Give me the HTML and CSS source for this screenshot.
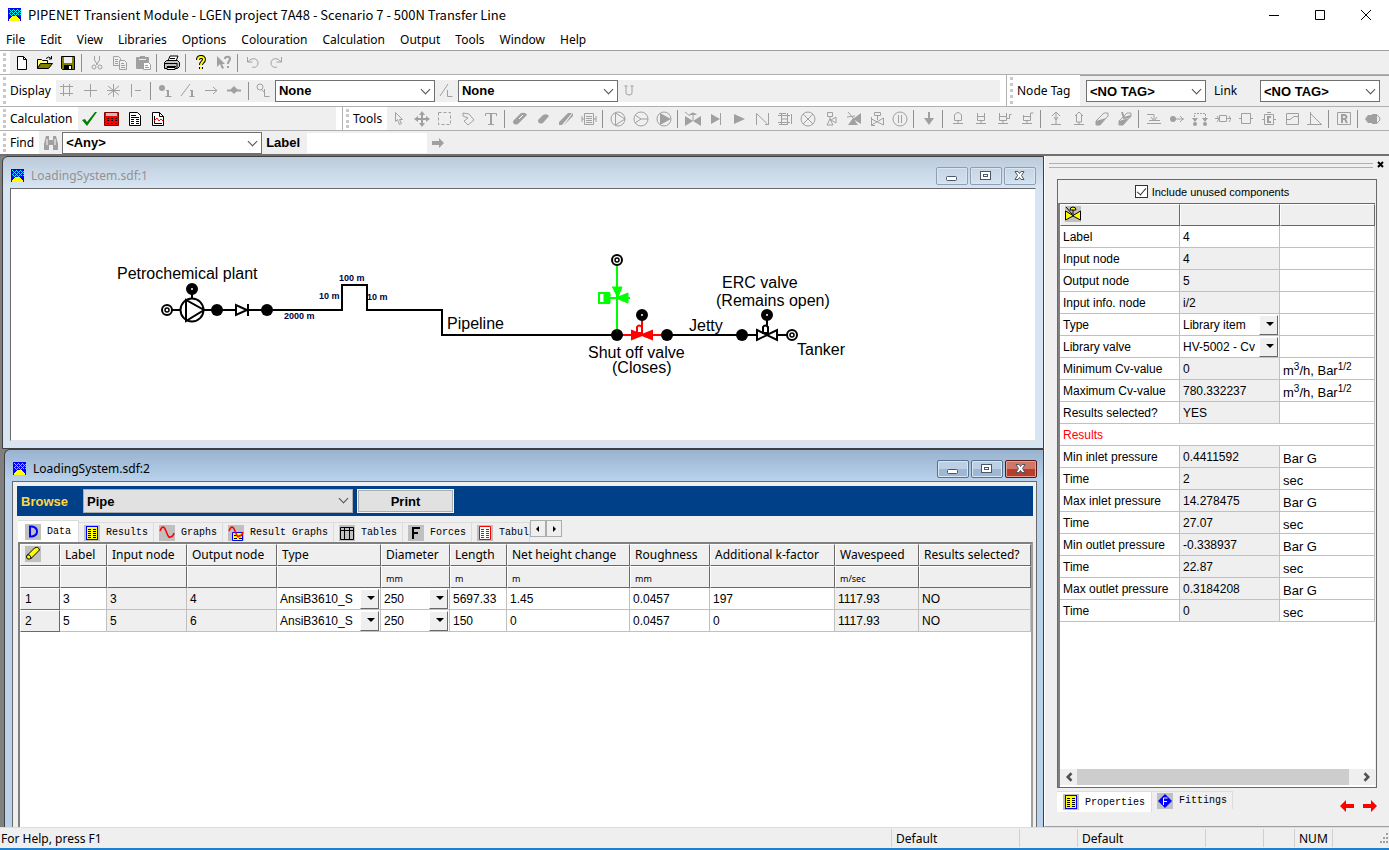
FILE: index.html
```html
<!DOCTYPE html>
<html lang="en">
<head>
    <meta charset="UTF-8">
    <meta name="viewport" content="width=device-width, initial-scale=1.0">
    <title>PIPENET Transient Module</title>
    <link rel="stylesheet" href="styles.css">
</head>
<body>
    <!-- shared symbols -->
    <svg class="defs" width="0" height="0">
        <symbol id="logo" viewBox="0 0 13 13">
            <rect width="13" height="13" fill="#00f"/>
            <path d="M1 1.500h12M1 5.500h12" stroke="#0ff" stroke-dasharray="1 3"/>
            <path d="M2 2.500h11M2 4.500h11M2 6.500h11" stroke="#0ff" stroke-dasharray="1 1"/>
            <path d="M3 3.500h10M3 7.500h8" stroke="#0ff" stroke-dasharray="1 3"/>
            <path d="M1 13v-2h1v-1h1V9h1V8h5v1h1v1h1v1h1v2z" fill="#ff0"/>
        </symbol>
        <symbol id="list" viewBox="0 0 16 16">
            <rect width="16" height="16" fill="#c0c0c0"/>
            <rect x="2.500" y="1.500" width="11" height="13" fill="#ff0" stroke="#00f"/>
            <path d="M4 4.500h3M9 4.500h3M4 6.500h3M9 6.500h3M4 8.500h3M9 8.500h3M4 10.500h3M9 10.500h3M4 12.500h3M9 12.500h3" stroke="#000"/>
        </symbol>
        <symbol id="node" viewBox="-7 -7 14 14">
            <circle r="5" fill="#fff" stroke="#000" stroke-width="2"/>
            <circle r="2" fill="#fff" stroke="#000" stroke-width="1.500"/>
        </symbol>
        <symbol id="min" viewBox="0 0 14 12"><rect x="1.500" y="6.500" width="10" height="4" rx="1" fill="#fff" stroke="#4a5568"/></symbol>
        <symbol id="max" viewBox="0 0 14 12"><rect x="1.500" y="1.500" width="10" height="8" fill="#fff" stroke="#4a5568"/><rect x="4.500" y="4.500" width="4" height="2" fill="none" stroke="#4a5568"/></symbol>
        <symbol id="cross" viewBox="0 0 14 12"><path d="M2 1.500h3l1.500 2 1.500-2h3L8.500 5.500l2.500 4H8l-1.500-2-1.500 2H2l2.500-4z" fill="#fff" stroke="#4a5568"/></symbol>
    </svg>

    <header class="title-bar">
        <svg class="logo"><use href="#logo"/></svg>
        <h1>PIPENET Transient Module - LGEN project 7A48 - Scenario 7 - 500N Transfer Line</h1>
        <div class="title-buttons">
            <button aria-label="Minimize"><svg viewBox="0 0 12 12"><path d="M1 6.500h10"/></svg></button>
            <button aria-label="Maximize"><svg viewBox="0 0 12 12"><path d="M1.500 1.500h9v9h-9z"/></svg></button>
            <button aria-label="Close"><svg viewBox="0 0 12 12"><path d="M1 1l10 10M11 1L1 11"/></svg></button>
        </div>
    </header>

    <nav class="menu-bar">
        <a href="#">File</a>
        <a href="#">Edit</a>
        <a href="#">View</a>
        <a href="#">Libraries</a>
        <a href="#">Options</a>
        <a href="#">Colouration</a>
        <a href="#">Calculation</a>
        <a href="#">Output</a>
        <a href="#">Tools</a>
        <a href="#">Window</a>
        <a href="#">Help</a>
    </nav>

    <!-- toolbars -->
    <div class="toolbar standard">
        <i class="handle"></i>
        <div class="tools">
            <button aria-label="New"><svg viewBox="0 0 16 16"><path d="M3.500 1.500h6l3 3v10h-9z" fill="#fff" stroke="#000"/><path d="M9.500 1.500v3h3" fill="none" stroke="#000"/></svg></button>
            <button aria-label="Open"><svg viewBox="0 0 16 16"><path d="M.5 13.500v-9h4l1 1h5v3" fill="#ffff80" stroke="#000"/><path d="M.5 13.500l3-5h12l-4 5z" fill="#808000" stroke="#000"/><path d="M9 3.500q3-3 5 0M14.500 1v3H12" fill="none" stroke="#000"/></svg></button>
            <button aria-label="Save"><svg viewBox="0 0 16 16"><path d="M1.500 1.500h13v13h-12l-1-1z" fill="#808000" stroke="#000"/><path d="M4 2h8v6H4z" fill="#efefef"/><path d="M4 10h8v5H4z" fill="#000"/><path d="M9 11h2v3H9z" fill="#fff"/></svg></button>
            <i class="sep"></i>
            <button aria-label="Cut"><svg class="off" viewBox="0 0 16 16"><path d="M5.500 1v4l3 5M10.500 1v4l-3 5"/><circle cx="5" cy="12" r="2"/><circle cx="11" cy="12" r="2"/></svg></button>
            <button aria-label="Copy"><svg class="off" viewBox="0 0 16 16"><path d="M1.500 1.500h5l2 2v7h-7zM3 4.500h3M3 6.500h3M3 8.500h3"/><path d="M7.500 5.500h5l2 2v7h-7zM9 8.500h3M9 10.500h4M9 12.500h4" fill="#efefef"/></svg></button>
            <button aria-label="Paste"><svg class="off" viewBox="0 0 16 16"><path d="M1.500 2.500h12v11h-12z" fill="#a0a0a0"/><path d="M5 1.500h5"/><path d="M4 4.500h7" stroke="#efefef"/><path d="M8.500 7.500h5l2 2v5h-7zM10 10.500h3M10 12.500h4" fill="#fff"/></svg></button>
            <i class="sep"></i>
            <button aria-label="Print"><svg viewBox="0 0 16 16"><path d="M4 6l2-5h8l-2 5z" fill="#fff" stroke="#000"/><path d="M6 3.500h5" stroke="#000"/><path d="M.5 7.500l2-2h11l2 2v4l-2 2h-13z" fill="#c0c0c0" stroke="#000"/><path d="M1 8.500h12M3 11.500h9M13 8v5" stroke="#000"/><path d="M3 12.500h8v2H3z" fill="#fff" stroke="#000"/></svg></button>
            <i class="sep"></i>
            <button aria-label="Help"><svg viewBox="0 0 16 16"><path d="M5 5c0-4 6-4 6-.5C11 7 8 7 8 10M8 12v2" fill="none" stroke="#000" stroke-width="4"/><path d="M5 5c0-4 6-4 6-.5C11 7 8 7 8 10M8 12v2" fill="none" stroke="#ff0" stroke-width="2"/></svg></button>
            <button aria-label="Context help"><svg class="off" viewBox="0 0 16 16"><path d="M1 1v11l3-3 2 5 2-1-2-4h3z" class="solid"/><path d="M9 4c0-3 5-3 5 0 0 2-2 2-2 5M12 11v2" stroke-width="2"/></svg></button>
            <i class="sep"></i>
            <button aria-label="Undo"><svg class="off" viewBox="0 0 16 16"><path d="M2.500 2v5h5M3 7c3-5 10-4 10 1 0 4-4 5-6 4"/></svg></button>
            <button aria-label="Redo"><svg class="off" viewBox="0 0 16 16"><path d="M13.500 2v5h-5M13 7C10 2 3 3 3 8c0 4 4 5 6 4"/></svg></button>
        </div>
    </div>

    <div class="toolbar-row">
        <div class="toolbar display">
            <i class="handle"></i>
            <span class="caption">Display</span>
            <div class="tools">
                <button aria-label="Grid"><svg class="off" viewBox="0 0 16 16"><path d="M4.500 1v12M10.500 1v12M1 3.500h13M1 10.500h13"/></svg></button>
                <button aria-label="Orthogonal"><svg class="off" viewBox="0 0 16 16"><path d="M8.500 1v13M2 7.500h13"/></svg></button>
                <button aria-label="Isometric"><svg class="off" viewBox="0 0 16 16"><path d="M8.500 1v13M2 7.500h13M3 3l11 9M14 3L3 12"/></svg></button>
                <button aria-label="Snap"><svg class="off" viewBox="0 0 16 16"><path d="M3.500 1v13M7 7.500h6"/></svg></button>
                <i class="sep"></i>
                <button aria-label="Node labels"><svg class="off" viewBox="0 0 16 16"><circle cx="5" cy="5" r="3" class="solid"/><path d="M9 7.500h2M8.500 13.500h6"/><path d="M11 7v6" stroke-width="2"/></svg></button>
                <button aria-label="Pipe labels"><svg class="off" viewBox="0 0 16 16"><path d="M1 13L10 1M10 7.500h2M9.500 13.500h5"/><path d="M12 7v6" stroke-width="2"/></svg></button>
                <button aria-label="Direction"><svg class="off" viewBox="0 0 16 16"><path d="M2 7.500h12M10 4l4 3.500-4 3.500"/></svg></button>
                <button aria-label="Fittings"><svg class="off" viewBox="0 0 16 16"><path d="M1 7.500h14" stroke-width="2"/><path d="M4 7l4-4 4 4-4 4z" class="solid"/></svg></button>
                <i class="sep"></i>
                <button aria-label="Node legend"><svg class="off" viewBox="0 0 16 16"><circle cx="5" cy="4" r="3"/><path d="M7 7l2 2M9.500 6v7.500h5"/></svg></button>
                <label class="combo wide"><select aria-label="Node colouring"><option>None</option></select></label>
                <button aria-label="Link legend"><svg class="off" viewBox="0 0 16 16"><path d="M2 13L10 1M9.500 7v6.500h5"/></svg></button>
                <label class="combo wide"><select aria-label="Link colouring"><option>None</option></select></label>
                <button aria-label="Units"><svg class="off" viewBox="0 0 16 16"><path d="M5 3v7q0 2 3 2t3-2V3M3.500 3h3M9.500 3h3"/></svg></button>
            </div>
        </div>
        <div class="toolbar tags">
            <i class="handle"></i>
            <span class="caption">Node Tag</span>
            <div class="tag-fields">
                <label class="combo tag"><select aria-label="Node tag"><option>&lt;NO TAG&gt;</option></select></label>
                <label class="link-label" for="linkTag">Link</label>
                <span class="combo tag"><select id="linkTag"><option>&lt;NO TAG&gt;</option></select></span>
            </div>
        </div>
    </div>

    <div class="toolbar-row">
        <div class="toolbar calc">
            <i class="handle"></i>
            <span class="caption">Calculation</span>
            <div class="tools">
                <button aria-label="Check"><svg viewBox="0 0 16 16"><path d="M1 9l3-1 2 3 8-10h2L6 15z" fill="#008000"/></svg></button>
                <button aria-label="Calculate"><svg viewBox="0 0 16 16"><path d="M.5 1.500h14v13H.5z" fill="#f00" stroke="#800"/><path d="M2 2h11v3H2z" fill="#c0c0c0"/><path d="M3 7.500h2M7 7.500h2M11 7.500h2M3 9.500h2M7 9.500h2M11 9.500h2M3 12.500h2M7 12.500h2M11 12.500h2" stroke="#000"/></svg></button>
                <button aria-label="Report"><svg viewBox="0 0 16 16"><path d="M2.500 1.500h8l3 3v10h-11z" fill="#fff" stroke="#000"/><path d="M4 4.500h5M4 6.500h8M4 8.500h3M9 8.500h3M4 10.500h3M9 10.500h3M4 12.500h3M9 12.500h3" stroke="#000"/></svg></button>
                <button aria-label="Graph"><svg viewBox="0 0 16 16"><path d="M2.500 1.500h7l4 4v9h-11z" fill="#fff" stroke="#000"/><path d="M9.500 1.500v4h4M4.500 5v7.500H12" fill="none" stroke="#000"/><path d="M4 10l3-3 2 3 2-2 2 2" fill="none" stroke="#f00"/></svg></button>
            </div>
        </div>
        <div class="toolbar draw">
            <i class="handle"></i>
            <span class="caption">Tools</span>
            <div class="tools">
                <button aria-label="Select"><svg class="off" viewBox="0 0 16 16"><path d="M4.500 1.500v9l2-2 2 5 2-1-2-4h3z"/></svg></button>
                <button aria-label="Move"><svg class="off" viewBox="0 0 16 16"><path d="M8 2v12M2 8h12" stroke-width="2"/><path d="M8 0l3 4H5zM8 16l3-4H5zM0 8l4-3v6zM16 8l-4-3v6z" class="solid"/></svg></button>
                <button aria-label="Area"><svg class="off" viewBox="0 0 16 16"><path d="M1.500 1.500h12v12h-12z" stroke-dasharray="3 2"/></svg></button>
                <button aria-label="Polygon"><svg class="off" viewBox="0 0 16 16"><path d="M3 2l6 1 5 6-6 5-4-4 4-3-5-2z"/></svg></button>
                <button aria-label="Text"><svg class="off" viewBox="0 0 16 16"><path d="M2.500 5V2.500h11V5M5 13.500h6"/><path d="M8 2v11" stroke-width="2"/></svg></button>
                <i class="sep"></i>
                <button aria-label="Pipe"><svg class="off" viewBox="0 0 16 16"><path d="M1 10l8-8q5-1 6 2l-9 9q-5 2-5-3z" class="solid"/><path d="M7 8l4-4" stroke="#fff"/></svg></button>
                <button aria-label="Short pipe"><svg class="off" viewBox="0 0 16 16"><path d="M3 9l5-5q4-2 6 1l-6 7q-5 2-5-3z" class="solid"/></svg></button>
                <button aria-label="Duct"><svg class="off" viewBox="0 0 16 16"><path d="M1 11l9-9h4L4 14H1zM6 14l9-9V2z" class="solid"/></svg></button>
                <button aria-label="Heat exchanger"><svg class="off" viewBox="0 0 16 16"><path d="M3.500 2.500h9v11h-9zM5 5.500h6M5 7.500h6M5 9.500h6M5 11.500h6M1 5v6M15 5v6M1 8h2M13 8h2"/></svg></button>
                <i class="sep"></i>
                <button aria-label="Pump"><svg class="off" viewBox="0 0 16 16"><circle cx="8" cy="8" r="7"/><path d="M5.500 2v12L15 8z"/></svg></button>
                <button aria-label="Fan"><svg class="off" viewBox="0 0 16 16"><circle cx="8" cy="8" r="7"/><path d="M2 4l6 4-6 4M8 8h7"/></svg></button>
                <button aria-label="Turbo pump"><svg class="off" viewBox="0 0 16 16"><circle cx="8" cy="8" r="7"/><path d="M4 2v12l11-6z" class="solid"/></svg></button>
                <i class="sep"></i>
                <button aria-label="Valve"><svg class="off" viewBox="0 0 16 16"><path d="M0 5l8 5 8-5v10l-8-5-8 5zM4 4q4-5 8 0z" class="solid"/><path d="M8 4v6M0 1l5 4"/></svg></button>
                <button aria-label="Check valve"><svg class="off" viewBox="0 0 16 16"><path d="M3 3v10l9-5z" class="solid"/><path d="M12.500 2v12"/></svg></button>
                <button aria-label="Arrow"><svg class="off" viewBox="0 0 16 16"><path d="M3 3v10l11-5z" class="solid"/></svg></button>
                <button aria-label="Non-return valve"><svg class="off" viewBox="0 0 16 16"><path d="M2.500 14V2.500L13 12.500M14.500 2v12M11 13.500h3"/></svg></button>
                <button aria-label="Regulator"><svg class="off" viewBox="0 0 16 16"><path d="M4.500 2v12M10.500 2v12M1 4.500h12M1 11.500h12M2 2.500h7M2 13.500h9M5 8h6M14.500 3v10"/></svg></button>
                <button aria-label="Nozzle"><svg class="off" viewBox="0 0 16 16"><circle cx="8" cy="8" r="7"/><path d="M3 3l10 10M13 3L3 13"/></svg></button>
                <button aria-label="Relief valve"><svg class="off" viewBox="0 0 16 16"><path d="M4.500 1.500h5v4h-5zM7 5v4M4 14l3-6 3 6zM13 6v6l-5-3z"/></svg></button>
                <button aria-label="Three way valve"><svg class="off" viewBox="0 0 16 16"><path d="M15 2v11L7 8zM2 14l5-7 5 7z" class="solid"/><path d="M2 1l6 7M1 6l8-1"/></svg></button>
                <button aria-label="Control valve"><svg class="off" viewBox="0 0 16 16"><path d="M5.500 1.500h6v3h-6zM8.500 5v4M2.500 6v8l12-7v7l-12-6M2 14.500h4"/></svg></button>
                <button aria-label="Orifice"><svg class="off" viewBox="0 0 16 16"><circle cx="8" cy="8" r="7"/><path d="M6.500 4v8M9.500 4v8"/></svg></button>
                <i class="sep"></i>
                <button aria-label="Outlet"><svg class="off" viewBox="0 0 16 16"><path d="M8 1v7" stroke-width="2"/><path d="M3 7h10l-5 7z" class="solid"/></svg></button>
                <i class="sep"></i>
                <button aria-label="Tank"><svg class="off" viewBox="0 0 16 16"><path d="M4.500 9.500V4q3.500-5 7 0v5.500zM8 10v3M3 12.500h10"/></svg></button>
                <button aria-label="Open tank"><svg class="off" viewBox="0 0 16 16"><path d="M4.500 2v7.500h7V2M4 5.500h7M8 10v3M3 12.500h10"/></svg></button>
                <button aria-label="Surge tank"><svg class="off" viewBox="0 0 16 16"><path d="M3.500 2v7.500h7V2M4 5.500h7M7 10v3M2 12.500h10M11 7.500h2.500v-4h2"/></svg></button>
                <button aria-label="Receiver"><svg class="off" viewBox="0 0 16 16"><path d="M4.500 4v5.500h7V2h3M4 5.500h7M8 10v3M3 12.500h10"/></svg></button>
                <i class="sep"></i>
                <button aria-label="Vent"><svg class="off" viewBox="0 0 16 16"><path d="M8 2v11M3 13.500h10M4 5l4-4 4 4M6 6l2 3 2-3"/></svg></button>
                <button aria-label="Vacuum breaker"><svg class="off" viewBox="0 0 16 16"><path d="M4 5l4-4 4 4M5.500 4v7h5V4M8 11v3M3 13.500h10"/></svg></button>
                <button aria-label="Pipe failure"><svg class="off" viewBox="0 0 16 16"><path d="M2 10l8-8h4v3L6 14H2z"/><path d="M2 10l10-3-6 7H2z" class="solid"/></svg></button>
                <button aria-label="Pipe break"><svg class="off" viewBox="0 0 16 16"><path d="M2 10l8-8h4v3L6 14H2z"/><path d="M2 10l10-3-6 7H2z" class="solid"/><path d="M5 1l2 6 7-2" stroke-width="2"/></svg></button>
                <i class="sep"></i>
                <button aria-label="Pressure sensor"><svg class="off" viewBox="0 0 16 16"><path d="M1 3.500h7v6M3 9.500h11M1 12.500h14M5 6l3 4 3-4"/></svg></button>
                <button aria-label="Info node"><svg class="off" viewBox="0 0 16 16"><circle cx="4" cy="8" r="3" class="solid"/><path d="M4 8h11M11 5l3 3-3 3"/></svg></button>
                <button aria-label="Differential sensor"><svg class="off" viewBox="0 0 16 16"><path d="M2.500 9V2.500h11V9" stroke-dasharray="2 1"/><circle cx="3" cy="13" r="2" class="solid"/><circle cx="13" cy="13" r="2" class="solid"/><path d="M0 7h6l-3 4zM10 7h6l-3 4z" class="solid"/></svg></button>
                <button aria-label="Transfer"><svg class="off" viewBox="0 0 16 16"><path d="M4.500 4.500h7v6h-7zM0 7.500h4M12 7.500h4M2 5l2 3-2 3M14 5l2 3-2 3"/></svg></button>
                <button aria-label="Controller"><svg class="off" viewBox="0 0 16 16"><path d="M3.500 2.500h9v10h-9zM1 7.500h2M13 7.500h2"/></svg></button>
                <button aria-label="Cascade controller"><svg class="off" viewBox="0 0 16 16"><path d="M3.500 3.500h9v10h-9zM1 8.500h2M13 8.500h2M6 1.500h4"/><path d="M10 6H7v5h3" stroke-width="2"/></svg></button>
                <button aria-label="Switch"><svg class="off" viewBox="0 0 16 16"><path d="M2.500 2.500h12v11h-12zM3 8.500h3l4-3h4"/></svg></button>
                <button aria-label="Ramp"><svg class="off" viewBox="0 0 16 16"><path d="M3.500 1v12.500M0 13.500h15M4 3l10 10"/></svg></button>
                <i class="sep"></i>
                <button aria-label="Report item"><svg class="off" viewBox="0 0 16 16"><path d="M1.500 1.500h13v12h-13z"/><path d="M6 12V4h3q3 2 0 4H6M9 8l2 4" stroke-width="2"/></svg></button>
                <i class="sep"></i>
                <button aria-label="Mark"><svg class="off" viewBox="0 0 16 16"><path d="M7 3h5v10H7zM0 8l3-4h4v8H3z" class="solid"/><path d="M12 4q6 4 0 8"/></svg></button>
            </div>
        </div>
    </div>

    <div class="toolbar find">
        <i class="handle"></i>
        <span class="caption">Find</span>
        <div class="tools">
            <button aria-label="Find"><svg class="off" viewBox="0 0 16 16"><path d="M3 1h3v4h4V1h3l2 8v6h-5v-5H6v5H1V9z" class="solid"/><path d="M4 4v6M12 4v6" stroke="#fff"/></svg></button>
            <label class="combo any"><select aria-label="Component type"><option>&lt;Any&gt;</option></select></label>
            <label class="strong" for="findLabel">Label</label>
            <input class="find-input" type="text" id="findLabel">
            <button aria-label="Go"><svg class="off" viewBox="0 0 16 16"><path d="M1 6h7V3l5 5-5 5v-3H1z" class="solid"/></svg></button>
        </div>
    </div>

    <main class="workspace">
        <div class="mdi">
            <!-- schematic window -->
            <section class="child inactive">
                <div class="child-title">
                    <svg class="logo"><use href="#logo"/></svg>
                    <h2>LoadingSystem.sdf:1</h2>
                    <button aria-label="Minimize"><svg><use href="#min"/></svg></button>
                    <button aria-label="Restore"><svg><use href="#max"/></svg></button>
                    <button aria-label="Close"><svg><use href="#cross"/></svg></button>
                </div>
                <div class="schematic">
                    <svg width="1024" height="250" viewBox="11 189 1024 250">
                        <g fill="none" stroke="#000" stroke-width="2">
                            <path d="M172 310h95M192 294v8"/>
                            <path d="M267 310h75v-25h25v25h75v25h175M667 335h120"/>
                            <circle cx="192" cy="310" r="11.500" fill="#fff"/>
                            <path d="M186 300v21l18-11zM186 300l18 10M186 321l18-11"/>
                            <path d="M236 305v10l11-5zM248 304v12" fill="#fff"/>
                        </g>
                        <g fill="none" stroke="#0f0" stroke-width="2">
                            <path d="M617 265v70M610 298h10"/>
                            <path d="M599 293h10v10h-10z" fill="#fff"/>
                            <path d="M604 293h6v10h-6zM612 287h10l-4 10 10-4v10l-10-4" fill="#0f0" stroke-width="1"/>
                            <path d="M618 298h12"/>
                        </g>
                        <g fill="none" stroke="#f00" stroke-width="2">
                            <path d="M622 335h40M642 320v15"/>
                            <path d="M632 331l10 4 10-4v8l-10-4-10 4z" fill="#f00"/>
                            <path d="M637 333v-6q2-3 5 0v6z"/>
                        </g>
                        <g stroke="#000" stroke-width="2" fill="#fff">
                            <path d="M757 330l10 5 10-5v10l-10-5-10 5zM767 320v15"/>
                            <path d="M763 333v-6q2-3 5 0v6z"/>
                        </g>
                        <g>
                            <circle cx="217" cy="310" r="6"/>
                            <circle cx="267" cy="310" r="6"/>
                            <circle cx="617" cy="335" r="6"/>
                            <circle cx="667" cy="335" r="6"/>
                            <circle cx="742" cy="335" r="6"/>
                            <g fill="#fff" stroke="#000" stroke-width="5">
                                <circle cx="192" cy="289" r="3.500"/>
                                <circle cx="642" cy="315" r="3.500"/>
                                <circle cx="767" cy="315" r="3.500"/>
                            </g>
                            <use href="#node" x="160" y="303" width="14" height="14"/>
                            <use href="#node" x="610" y="253" width="14" height="14"/>
                            <use href="#node" x="785" y="328" width="14" height="14"/>
                        </g>
                        <g class="place">
                            <text x="117" y="279">Petrochemical plant</text>
                            <text x="447" y="329">Pipeline</text>
                            <text x="588" y="358">Shut off valve</text>
                            <text x="612" y="373">(Closes)</text>
                            <text x="689" y="331">Jetty</text>
                            <text x="722" y="288">ERC valve</text>
                            <text x="716" y="306">(Remains open)</text>
                            <text x="797" y="355">Tanker</text>
                        </g>
                        <g class="length">
                            <text x="339" y="281">100 m</text>
                            <text x="319" y="299">10 m</text>
                            <text x="367" y="300">10 m</text>
                            <text x="284" y="319">2000 m</text>
                        </g>
                    </svg>
                </div>
            </section>

            <!-- data window -->
            <section class="child active">
                <div class="child-title">
                    <svg class="logo"><use href="#logo"/></svg>
                    <h2>LoadingSystem.sdf:2</h2>
                    <button aria-label="Minimize"><svg><use href="#min"/></svg></button>
                    <button aria-label="Restore"><svg><use href="#max"/></svg></button>
                    <button class="close" aria-label="Close"><svg><use href="#cross"/></svg></button>
                </div>
                <div class="data">
                    <div class="browse">
                        <label for="browse">Browse</label>
                        <span class="combo"><select id="browse"><option>Pipe</option></select></span>
                        <button>Print</button>
                    </div>
                    <div class="tabs">
                        <button class="tab selected"><svg viewBox="0 0 16 16"><rect width="16" height="16" fill="#c0c0c0"/><path d="M5 2.500v10h2q5-1 5-5t-5-5z" fill="none" stroke="#00f" stroke-width="2"/></svg>Data</button>
                        <button class="tab"><svg><use href="#list"/></svg>Results</button>
                        <button class="tab"><svg viewBox="0 0 16 16"><rect width="16" height="16" fill="#c0c0c0"/><path d="M1 6q3-8 6 0t4 6q3 0 4-4" fill="none" stroke="#f00" stroke-width="1.500"/></svg>Graphs</button>
                        <button class="tab"><svg viewBox="0 0 16 16"><rect width="16" height="16" fill="#c0c0c0"/><path d="M4.500 7.500h10v8h-10z" fill="#ff0" stroke="#00f"/><path d="M6 10.500h3M11 10.500h3M6 13.500h3M11 13.500h3" stroke="#000"/><path d="M1 6q3-8 6 0t4 5q3 0 4-4" fill="none" stroke="#f00" stroke-width="1.500"/></svg>Result Graphs</button>
                        <button class="tab"><svg viewBox="0 0 16 16"><rect width="16" height="16" fill="#c0c0c0"/><path d="M1.500 2.500h13v12h-13zM1 5.500h13M5.500 3v12M10.500 3v12" fill="none" stroke="#000"/></svg>Tables</button>
                        <button class="tab"><svg viewBox="0 0 16 16"><rect width="16" height="16" fill="#c0c0c0"/><path d="M5 14V3h7M5 8h5" fill="none" stroke="#000" stroke-width="2"/></svg>Forces</button>
                        <button class="tab cut"><svg viewBox="0 0 16 16"><rect width="16" height="16" fill="#c0c0c0"/><path d="M2.500 1.500h11v13h-11z" fill="#fff" stroke="#f00"/><path d="M4 4.500h3M9 4.500h3M4 6.500h3M9 6.500h3M4 8.500h3M9 8.500h3M4 10.500h3M9 10.500h3M4 12.500h3M9 12.500h3" stroke="#f00"/></svg>Tabul</button>
                        <button class="scroll" aria-label="Previous tabs"><svg viewBox="0 0 8 8"><path d="M5 1v6L2 4z"/></svg></button>
                        <button class="scroll" aria-label="More tabs"><svg viewBox="0 0 8 8"><path d="M3 1v6l3-3z"/></svg></button>
                    </div>
                    <div class="sheet">
                        <table class="grid pipes">
                            <colgroup>
                                <col class="c-num"><col class="c-label"><col class="c-in"><col class="c-out"><col class="c-type"><col class="c-dia"><col class="c-len"><col class="c-net"><col class="c-rough"><col class="c-k"><col class="c-wave"><col>
                            </colgroup>
                            <thead>
                                <tr><th><svg class="cell-icon" viewBox="0 0 16 16"><rect width="16" height="16" fill="#c0c0c0"/><path d="M1.500 10l8-8q4-2 5 2l-8 8q-5 3-5-2z" fill="#ff0" stroke="#000"/><path d="M2 9q4-1 4 4" fill="none" stroke="#000"/></svg></th><th>Label</th><th>Input node</th><th>Output node</th><th>Type</th><th>Diameter</th><th>Length</th><th>Net height change</th><th>Roughness</th><th>Additional k-factor</th><th>Wavespeed</th><th>Results selected?</th></tr>
                                <tr class="units"><th></th><th></th><th></th><th></th><th></th><th>mm</th><th>m</th><th>m</th><th>mm</th><th></th><th>m/sec</th><th></th></tr>
                            </thead>
                            <tbody>
                                <tr><th>1</th><td>3</td><td class="ro">3</td><td class="ro">4</td><td class="pick"><select aria-label="Type"><option>AnsiB3610_S</option></select></td><td class="pick"><select aria-label="Diameter"><option>250</option></select></td><td>5697.33</td><td>1.45</td><td>0.0457</td><td>197</td><td class="ro">1117.93</td><td class="ro">NO</td></tr>
                                <tr><th>2</th><td>5</td><td class="ro">5</td><td class="ro">6</td><td class="pick"><select aria-label="Type"><option>AnsiB3610_S</option></select></td><td class="pick"><select aria-label="Diameter"><option>250</option></select></td><td>150</td><td>0</td><td>0.0457</td><td>0</td><td class="ro">1117.93</td><td class="ro">NO</td></tr>
                            </tbody>
                        </table>
                    </div>
                </div>
            </section>
        </div>

        <!-- properties panel -->
        <aside class="panel">
            <div class="gripper"><i></i><button aria-label="Close panel"><svg viewBox="0 0 8 8"><path d="M1 1l5 5M6 1L1 6" stroke="#000" stroke-width="2"/></svg></button></div>
            <div class="props">
                <label class="unused"><input type="checkbox" checked>Include unused components</label>
                <div class="props-body">
                    <table class="grid">
                        <colgroup><col class="c-name"><col class="c-value"><col></colgroup>
                        <thead>
                            <tr><th><svg class="cell-icon" viewBox="0 0 16 16"><rect width="16" height="16" fill="#c0c0c0"/><path d="M.5 5l7.500 4.500L15.500 5v9L8 10l-7.500 4z" fill="#ff0" stroke="#000"/><path d="M5 4q0-3 3-3t3 3z" fill="#ff0" stroke="#000"/><path d="M8 4v6M1 1l6 7" stroke="#000"/></svg></th><th></th><th></th></tr>
                        </thead>
                        <tbody>
                            <tr><td>Label</td><td>4</td><td></td></tr>
                            <tr><td>Input node</td><td class="ro">4</td><td></td></tr>
                            <tr><td>Output node</td><td class="ro">5</td><td></td></tr>
                            <tr><td>Input info. node</td><td class="ro">i/2</td><td></td></tr>
                            <tr><td>Type</td><td class="pick"><select aria-label="Type"><option>Library item</option></select></td><td></td></tr>
                            <tr><td>Library valve</td><td class="pick"><select aria-label="Library valve"><option>HV-5002 - Cv</option></select></td><td></td></tr>
                            <tr><td>Minimum Cv-value</td><td class="ro">0</td><td class="unit">m<sup>3</sup>/h, Bar<sup>1/2</sup></td></tr>
                            <tr><td>Maximum Cv-value</td><td class="ro">780.332237</td><td class="unit">m<sup>3</sup>/h, Bar<sup>1/2</sup></td></tr>
                            <tr><td>Results selected?</td><td class="ro">YES</td><td></td></tr>
                            <tr><td class="group" colspan="3">Results</td></tr>
                            <tr><td>Min inlet pressure</td><td class="ro">0.4411592</td><td class="unit">Bar G</td></tr>
                            <tr><td>Time</td><td class="ro">2</td><td class="unit">sec</td></tr>
                            <tr><td>Max inlet pressure</td><td class="ro">14.278475</td><td class="unit">Bar G</td></tr>
                            <tr><td>Time</td><td class="ro">27.07</td><td class="unit">sec</td></tr>
                            <tr><td>Min outlet pressure</td><td class="ro">-0.338937</td><td class="unit">Bar G</td></tr>
                            <tr><td>Time</td><td class="ro">22.87</td><td class="unit">sec</td></tr>
                            <tr><td>Max outlet pressure</td><td class="ro">0.3184208</td><td class="unit">Bar G</td></tr>
                            <tr><td>Time</td><td class="ro">0</td><td class="unit">sec</td></tr>
                        </tbody>
                    </table>
                    <div class="hscroll">
                        <button aria-label="Scroll left"><svg viewBox="0 0 8 8"><path d="M6 1L3 4l3 3"/></svg></button>
                        <i class="thumb"></i>
                        <button aria-label="Scroll right"><svg viewBox="0 0 8 8"><path d="M2 1l3 3-3 3"/></svg></button>
                    </div>
                </div>
            </div>
            <div class="panel-foot">
                <button class="tab selected"><svg><use href="#list"/></svg>Properties</button>
                <button class="tab"><svg viewBox="0 0 16 16"><rect width="16" height="16" fill="#c0c0c0"/><path d="M8 1l7 7-7 7-7-7z" fill="#00f"/><path d="M6.500 12V5h4M6 8.500h4" fill="none" stroke="#fff"/></svg>Fittings</button>
                <button class="arrow" aria-label="Previous"><svg viewBox="0 0 14 12"><path d="M0 6l6-6v4h8v4H6v4z" fill="#f00"/></svg></button>
                <button class="arrow" aria-label="Next"><svg viewBox="0 0 14 12"><path d="M14 6L8 0v4H0v4h8v4z" fill="#f00"/></svg></button>
            </div>
        </aside>
    </main>

    <footer class="status">
        <span class="message">For Help, press F1</span>
        <span class="s-wide">Default</span>
        <span class="s-mid"></span>
        <span class="s-wide">Default</span>
        <span class="s-mid"></span>
        <span class="s-tiny"></span>
        <span class="s-small">NUM</span>
        <span class="s-small"></span>
        <svg class="size-grip" viewBox="0 0 12 12"><path d="M9 2h2M6 6h2M9 6h2M3 10h2M6 10h2M9 10h2" stroke="#a0a0a0" stroke-width="2"/></svg>
    </footer>
</body>
</html>
```

FILE: styles.css
```css
/* base */
* {
    box-sizing: border-box;
}
body {
    margin: 0;
    height: 100vh;
    display: flex;
    flex-direction: column;
    overflow: hidden;
    background-color: #efefef;
    color: #000;
    font-family: "Noto Sans", "Open Sans", sans-serif;
    font-size: 12px;
    line-height: 16px;
}
h1, h2 {
    margin: 0;
    font-size: 12px;
    font-weight: normal;
}
h1 {
    font: 13px/18px "Noto Sans CJK SC", "Noto Sans", sans-serif;
}
button, select, input {
    font: inherit;
    color: inherit;
    margin: 0;
    padding: 0;
}
button {
    border: none;
    background: none;
    display: flex;
    align-items: center;
    justify-content: center;
}
.defs {
    position: absolute;
}
.logo {
    width: 13px;
    height: 13px;
    flex: none;
}

/* title and menu */
.title-bar {
    display: flex;
    align-items: center;
    height: 29px;
    padding-left: 8px;
    gap: 7px;
    background-color: #fff;
}
.title-buttons {
    display: flex;
    margin-left: auto;
}
.title-buttons button {
    width: 46px;
}
.title-buttons svg {
    width: 12px;
    height: 12px;
    fill: none;
    stroke: #000;
}
.menu-bar {
    display: flex;
    gap: 15px;
    height: 22px;
    padding: 3px 6px;
    background-color: #fff;
    border-bottom: 1px solid #a0a0a0;
}
.menu-bar a {
    color: #000;
    text-decoration: none;
}

/* toolbars */
.toolbar-row {
    display: flex;
}
.toolbar {
    display: flex;
    align-items: center;
    height: 24px;
    background-color: #fff;
    border-bottom: 1px solid #b0b0b0;
    flex: none;
}
.handle {
    width: 3px;
    align-self: stretch;
    margin: 2px 4px 2px 3px;
    border-left: 3px dotted #c8c8c8;
}
.caption {
    padding-right: 5px;
    white-space: nowrap;
}
.tools {
    display: flex;
    flex: 1;
    align-items: center;
    align-self: stretch;
    min-width: 0;
    background-color: #efefef;
}
.tools button {
    width: 23px;
    height: 22px;
    flex: none;
}
.tools svg {
    width: 16px;
    height: 16px;
}
.off {
    fill: none;
    stroke: #a0a0a0;
}
.off .solid {
    fill: #a0a0a0;
    stroke: none;
}
.sep {
    width: 1px;
    height: 18px;
    margin: 0 3px 0 2px;
    background-color: #909090;
    flex: none;
}
.display {
    flex: 1;
    height: 32px;
    border-right: 1px solid #b0b0b0;
    padding-right: 6px;
}
.display .tools {
    align-self: center;
    height: 22px;
}
.tags {
    width: 382px;
    height: 32px;
}
.tags .caption {
    flex: 1;
}
.tag-fields {
    display: flex;
    width: 309px;
    align-self: stretch;
    align-items: center;
    background-color: #efefef;
    border-top: 1px solid #a0a0a0;
    padding-left: 6px;
}
.link-label {
    width: 54px;
    padding-left: 8px;
}
.calc {
    width: 343px;
    border-right: 1px solid #b0b0b0;
    padding-right: 6px;
}
.draw {
    flex: 1;
    overflow: hidden;
}
.find {
    height: 25px;
    border-bottom: 2px solid #707070;
}
.strong {
    width: 45px;
    padding-left: 4px;
    font: bold 13px "Liberation Sans", sans-serif;
}
.find-input {
    width: 120px;
    height: 20px;
    border: none;
    background-color: #fff;
}

/* drop-downs */
.combo {
    position: relative;
    display: block;
    height: 22px;
    flex: none;
}
.combo::after {
    content: "";
    position: absolute;
    right: 6px;
    top: 6px;
    width: 6px;
    height: 6px;
    border: solid #505050;
    border-width: 0 1px 1px 0;
    transform: rotate(45deg);
    pointer-events: none;
}
.combo select {
    appearance: none;
    width: 100%;
    height: 100%;
    padding: 0 3px;
    background-color: #fff;
    border: 1px solid #707070;
    border-radius: 0;
    font: bold 13px "Liberation Sans", sans-serif;
}
.combo.wide {
    width: 160px;
}
.combo.tag {
    width: 120px;
}
.combo.any {
    width: 200px;
}

/* child windows */
.workspace {
    display: flex;
    flex: 1;
    min-height: 0;
}
.mdi {
    display: flex;
    flex-direction: column;
    flex: 1;
    min-width: 0;
    padding-left: 2px;
    background-color: #808080;
}
.child {
    display: flex;
    flex-direction: column;
    border: 1px solid #404040;
    border-top-left-radius: 6px;
}
.inactive {
    height: 293px;
    padding: 0 7px 7px;
    background: linear-gradient(#bccbdb, #d7e4f2 30px);
    flex: none;
}
.active {
    flex: 1;
    margin-left: 2px;
    padding: 0 6px 0 7px;
    border-bottom: none;
    background: linear-gradient(#98b3d0, #b9d1ea 30px);
}
.child-title {
    display: flex;
    align-items: center;
    height: 31px;
    flex: none;
    padding: 6px 0 0 1px;
    gap: 2px;
}
.child-title h2 {
    flex: 1;
    padding-left: 5px;
}
.inactive h2 {
    color: #929292;
}
.child-title button {
    width: 32px;
    height: 18px;
    border: 1px solid #8d9fb5;
    border-radius: 2px;
    box-shadow: inset 0 0 0 1px #dce6f1;
}
.active .child-title button {
    border-color: #58708d;
    background: linear-gradient(#bccfe4 50%, #9eb8d4 50%);
}
.active .child-title .close {
    border-color: #5b1714;
    box-shadow: inset 0 0 0 1px #e0a194;
    background: linear-gradient(#cf7867 50%, #b83e2b 50%);
}
.child-title button svg {
    width: 14px;
    height: 12px;
}
.schematic {
    flex: 1;
    overflow: hidden;
    background-color: #fff;
    border: 1px solid #696969;
    border-right-color: #e3e3e3;
    border-bottom-color: #e3e3e3;
}
.schematic svg {
    display: block;
}
.place {
    font: 16px "Liberation Sans", sans-serif;
}
.length {
    font: bold 9px "Liberation Sans", sans-serif;
    fill: #000040;
}

/* data window */
.data {
    display: flex;
    flex-direction: column;
    flex: 1;
    padding: 4px 3px 0 4px;
    background-color: #efefef;
    border: 1px solid #696969;
    border-bottom: none;
}
.browse {
    display: flex;
    align-items: center;
    height: 30px;
    padding-left: 4px;
    gap: 5px;
    background-color: #004088;
    font: bold 13px "Liberation Sans", sans-serif;
}
.browse label {
    width: 57px;
    color: #ffd740;
}
.browse .combo {
    width: 270px;
    height: 24px;
}
.browse select {
    background-color: #e1e1e1;
    border-color: #adadad;
}
.browse button {
    width: 95px;
    height: 22px;
    background-color: #e1e1e1;
    border: 1px solid #adadad;
    box-shadow: 0 0 0 1px #f4f4f4;
}
.tabs {
    display: flex;
    align-items: flex-end;
    height: 26px;
    padding: 4px 0 0 1px;
}
.tab {
    height: 20px;
    padding: 0 5px;
    gap: 6px;
    border: 1px solid #dcdcdc;
    border-bottom: none;
    border-left: none;
    font: 10px "Liberation Mono", monospace;
    white-space: pre;
    flex: none;
}
.tab svg {
    width: 16px;
    height: 16px;
    flex: none;
}
.tab.selected {
    height: 22px;
    padding: 0 7px;
    background-color: #fff;
}
.tab.cut {
    width: 58px;
    padding-right: 0;
    justify-content: flex-start;
    overflow: hidden;
}
.scroll {
    width: 16px;
    height: 17px;
    align-self: flex-start;
    border: 1px solid #adadad;
}
.scroll svg {
    width: 8px;
    height: 8px;
}
.sheet {
    flex: 1;
    background-color: #fff;
    border: 2px solid #808080;
    border-right-color: #a0a0a0;
    border-bottom: none;
    margin-left: 1px;
}

/* grids */
.grid {
    width: 100%;
    table-layout: fixed;
    border-collapse: separate;
    border-spacing: 0;
    font: 12px "Liberation Sans", sans-serif;
}
.grid th, .grid td {
    height: 22px;
    padding: 0 3px;
    text-align: left;
    font-weight: normal;
    white-space: nowrap;
    overflow: hidden;
    border: solid #c0c0c0;
    border-width: 0 1px 1px 0;
}
.grid th {
    background-color: #efefef;
    border: 1px solid #696969;
    border-top-color: #fff;
    border-left-color: #fff;
    padding: 0 4px;
}
.pipes thead th {
    font: 12px/16px "Noto Sans", sans-serif;
}
.pipes .units th {
    font-size: 9px;
    padding-top: 4px;
}
.grid .ro {
    background-color: #efefef;
}
.grid .group {
    color: #f00;
}
.grid .unit {
    padding-top: 4px;
    font-size: 13px;
    line-height: 16px;
}
.unit sup {
    font-size: 10px;
    line-height: 0;
}
.cell-icon {
    display: block;
    width: 16px;
    height: 16px;
    margin-bottom: 3px;
}
.pick {
    position: relative;
}
.pick select {
    appearance: none;
    display: block;
    width: 100%;
    border: none;
    background: none;
}
.pick::before {
    content: "";
    position: absolute;
    right: 1px;
    top: 1px;
    width: 17px;
    height: 18px;
    background-color: #efefef;
    border: 1px solid #696969;
    border-top-color: #fff;
    border-left-color: #fff;
    pointer-events: none;
}
.pick::after {
    content: "";
    position: absolute;
    right: 5px;
    top: 8px;
    border: 4px solid transparent;
    border-top-color: #000;
    border-bottom: none;
    pointer-events: none;
}
.c-num { width: 40px; }
.c-label { width: 47px; }
.c-in { width: 80px; }
.c-out { width: 90px; }
.c-type { width: 104px; }
.c-dia { width: 69px; }
.c-len { width: 57px; }
.c-net { width: 123px; }
.c-rough { width: 80px; }
.c-k { width: 125px; }
.c-wave { width: 84px; }
.c-name { width: 120px; }
.c-value { width: 100px; }

/* properties panel */
.panel {
    display: flex;
    flex-direction: column;
    width: 345px;
    flex: none;
    padding: 5px 12px 14px;
    border-left: 1px solid #fff;
    border-bottom: 1px solid #a0a0a0;
}
.gripper {
    display: flex;
    align-items: center;
    gap: 4px;
    height: 8px;
    margin: 0 -8px 10px;
}
.gripper i {
    flex: 1;
    height: 5px;
    border: 1px solid #b0b0b0;
    border-width: 1px 0;
}
.gripper button, .gripper svg {
    width: 8px;
    height: 8px;
}
.props {
    display: flex;
    flex-direction: column;
    flex: 1;
    border: 1px solid #696969;
}
.unused {
    display: flex;
    align-items: center;
    justify-content: center;
    gap: 4px;
    height: 23px;
    padding-right: 10px;
    font: 11px "Liberation Sans", sans-serif;
}
.unused input {
    appearance: none;
    width: 13px;
    height: 13px;
    border: 1px solid #333;
    background-color: #fff;
    display: flex;
    justify-content: center;
}
.unused input::before {
    content: "";
    width: 4px;
    height: 8px;
    border: solid #333;
    border-width: 0 1px 1px 0;
    transform: rotate(40deg);
}
.props-body {
    display: flex;
    flex-direction: column;
    flex: 1;
    padding-bottom: 2px;
    background-color: #fff;
    border-top: 1px solid #696969;
    border-left: 2px solid #808080;
    margin-right: 1px;
}
.hscroll {
    display: flex;
    align-items: center;
    height: 16px;
    margin-top: auto;
    background-color: #efefef;
}
.hscroll button {
    width: 17px;
}
.hscroll svg {
    width: 10px;
    height: 10px;
    fill: none;
    stroke: #505050;
    stroke-width: 2;
}
.hscroll .thumb {
    flex: 1;
    height: 16px;
    margin-right: 9px;
    background-color: #cdcdcd;
}
.panel-foot {
    display: flex;
    align-items: flex-start;
    padding-top: 3px;
}
.panel-foot .tab {
    height: 18px;
}
.panel-foot .tab.selected {
    height: 21px;
    padding: 0 6px;
}
.arrow {
    align-self: flex-end;
    margin-left: 9px;
}
.tab + .arrow {
    margin-left: auto;
}
.arrow svg {
    width: 14px;
    height: 12px;
}

/* status bar */
.status {
    display: flex;
    align-items: center;
    height: 23px;
    flex: none;
    border-top: 1px solid #dcdcdc;
    border-bottom: 2px solid #2080d0;
}
.status span {
    height: 18px;
    padding: 2px 4px 0;
    border-left: 1px solid #d0d0d0;
}
.status .message {
    flex: 1;
    padding-left: 1px;
    border: none;
}
.s-wide { width: 128px; }
.s-mid { width: 58px; }
.s-tiny { width: 31px; }
.s-small { width: 38px; }
.size-grip {
    width: 12px;
    height: 12px;
    margin-left: 7px;
}
```
